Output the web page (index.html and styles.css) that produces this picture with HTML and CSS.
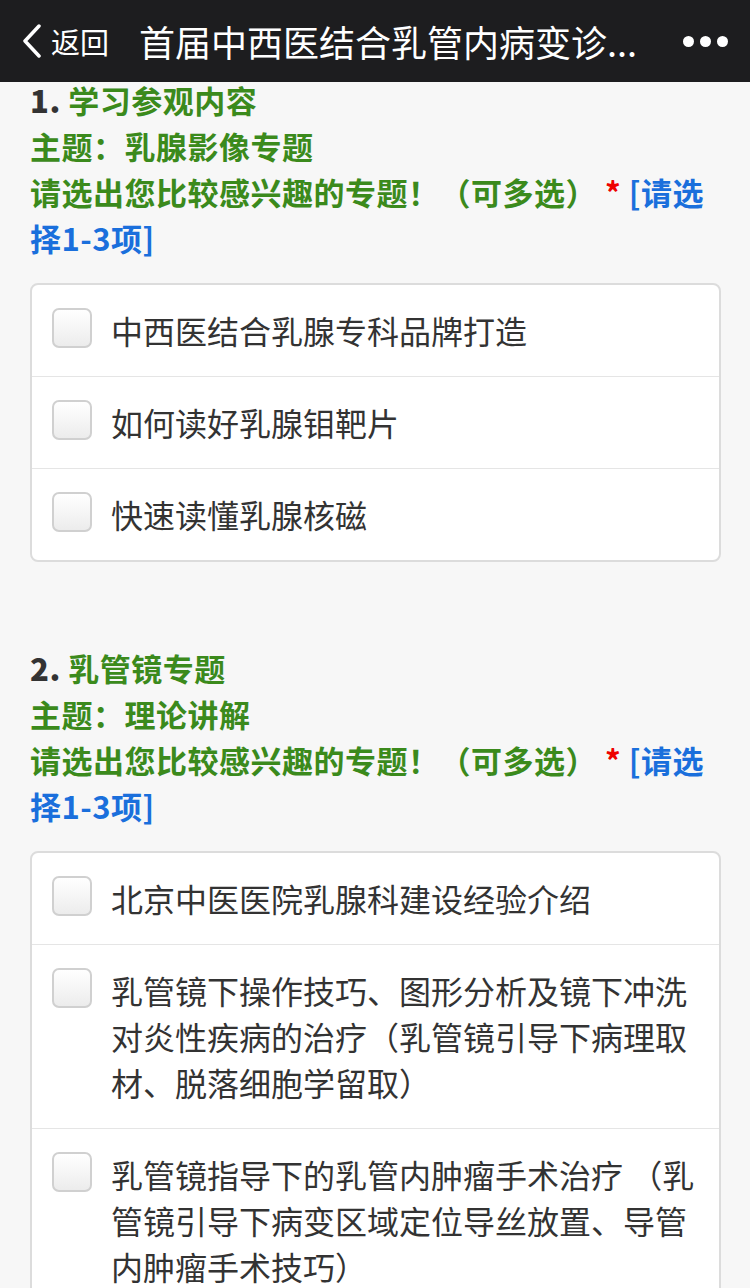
FILE: index.html
```html
<!DOCTYPE html>
<html lang="zh-CN">
<head>
  <meta charset="UTF-8">
  <meta name="viewport" content="width=device-width, initial-scale=1.0">
  <title>首届中西医结合乳管内病变诊疗</title>
  <link rel="stylesheet" href="styles.css">
</head>
<body>
  <div class="navbar">
    <div class="nav-back">
      <svg class="chevron" width="20" height="34" viewBox="0 0 20 34">
        <path d="M17 2 L3 17 L17 32" fill="none" stroke="#fff" stroke-width="3.5" stroke-linecap="round" stroke-linejoin="round"/>
      </svg>
      <span>返回</span>
    </div>
    <div class="nav-title">首届中西医结合乳管内病变诊...</div>
    <div class="nav-more"><i></i><i></i><i></i></div>
  </div>

  <div class="content">
    <div class="question">
      <div class="q-title">
        <b class="q-num">1.</b> 学习参观内容<br>
        主题：乳腺影像专题<br>
        请选出您比较感兴趣的专题！（可多选）<span class="req">*</span> <span class="hint">[请选择1-3项]</span>
      </div>
      <div class="options">
        <label class="option"><span class="box"></span><span class="text">中西医结合乳腺专科品牌打造</span></label>
        <label class="option"><span class="box"></span><span class="text">如何读好乳腺钼靶片</span></label>
        <label class="option"><span class="box"></span><span class="text">快速读懂乳腺核磁</span></label>
      </div>
    </div>

    <div class="question">
      <div class="q-title">
        <b class="q-num">2.</b> 乳管镜专题<br>
        主题：理论讲解<br>
        请选出您比较感兴趣的专题！（可多选）<span class="req">*</span> <span class="hint">[请选择1-3项]</span>
      </div>
      <div class="options">
        <label class="option"><span class="box"></span><span class="text">北京中医医院乳腺科建设经验介绍</span></label>
        <label class="option"><span class="box"></span><span class="text">乳管镜下操作技巧、图形分析及镜下冲洗对炎性疾病的治疗（乳管镜引导下病理取材、脱落细胞学留取）</span></label>
        <label class="option"><span class="box"></span><span class="text">乳管镜指导下的乳管内肿瘤手术治疗 （乳管镜引导下病变区域定位导丝放置、导管内肿瘤手术技巧）</span></label>
      </div>
    </div>
  </div>
</body>
</html>
```

FILE: styles.css
```css
body {
  margin: 0;
  background: #f7f7f7;
  font-family: "Noto Sans CJK SC", "Liberation Sans", sans-serif;
  color: #333;
}

/* 顶部导航 */
.navbar {
  height: 82px;
  background: #1d1d1f;
  color: #fff;
  display: flex;
  align-items: center;
  padding: 0 22px;
  box-sizing: border-box;
}

.nav-back {
  display: flex;
  align-items: center;
  font-size: 29px;
  flex-shrink: 0;
}

.nav-back .chevron {
  margin-right: 9px;
}

.nav-title {
  flex: 1;
  margin-left: 30px;
  font-size: 36px;
  white-space: nowrap;
  overflow: hidden;
  min-width: 0;
}

.nav-more {
  display: flex;
  gap: 6px;
  margin-left: 16px;
  flex-shrink: 0;
}

.nav-more i {
  width: 11px;
  height: 11px;
  border-radius: 50%;
  background: #fff;
}

/* 问卷内容 */
.content {
  padding: 0 29px 0 30px;
}

.question {
  padding-bottom: 88px;
}

.q-title {
  font-size: 31px;
  font-weight: bold;
  line-height: 46px;
  letter-spacing: 0.5px;
  color: #3b8a1c;
  margin-top: -5px;
}

.q-num {
  color: #333;
}

.req {
  color: #e00;
  margin-left: 8px;
}

.hint {
  color: #1a6fdc;
}

.options {
  margin-top: 22px;
  background: #fff;
  border: 2px solid #dcdcdc;
  border-radius: 8px;
}

.option {
  display: flex;
  align-items: flex-start;
  padding: 22px 20px 23px 20px;
  border-top: 1px solid #e5e5e5;
}

.option:first-child {
  border-top: none;
}

.box {
  flex-shrink: 0;
  width: 36px;
  height: 36px;
  border: 2px solid #d0d0d0;
  border-radius: 7px;
  background: linear-gradient(#fff, #ececec);
  margin-right: 19px;
  margin-top: 1px;
}

.text {
  font-size: 32px;
  line-height: 46px;
  color: #333;
}
```
